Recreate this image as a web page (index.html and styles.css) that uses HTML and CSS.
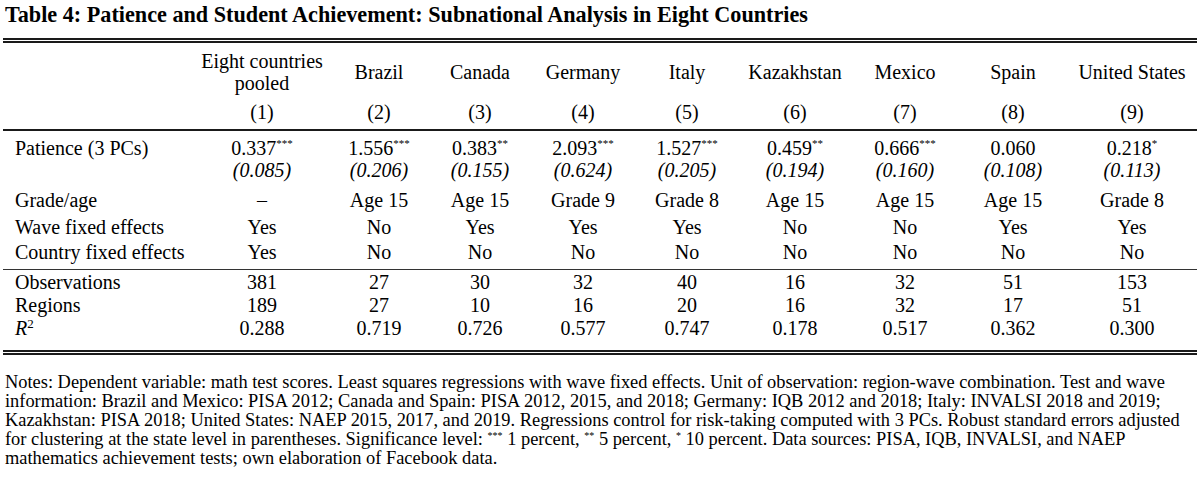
FILE: index.html
```html
<!DOCTYPE html>
<html lang="en">
<head>
<meta charset="utf-8">
<title>Table 4</title>
<link rel="stylesheet" href="styles.css">
</head>
<body>
<div class="page">
  <h1 class="title">Table 4: Patience and Student Achievement: Subnational Analysis in Eight Countries</h1>
  <div class="rule-double rule-top"></div>
  <table class="tbl">
    <colgroup>
      <col class="c-label"><col class="c1"><col class="c2"><col class="c3"><col class="c4"><col class="c5"><col class="c6"><col class="c7"><col class="c8"><col class="c9">
    </colgroup>
    <thead>
      <tr class="hdr-names">
        <th></th><th>Eight countries<br>pooled</th><th>Brazil</th><th>Canada</th><th>Germany</th><th>Italy</th><th>Kazakhstan</th><th>Mexico</th><th>Spain</th><th>United States</th>
      </tr>
      <tr class="hdr-nums">
        <th></th><th>(1)</th><th>(2)</th><th>(3)</th><th>(4)</th><th>(5)</th><th>(6)</th><th>(7)</th><th>(8)</th><th>(9)</th>
      </tr>
    </thead>
    <tbody class="main">
      <tr class="r-coef">
        <td>Patience (3 PCs)</td><td>0.337<sup>***</sup></td><td>1.556<sup>***</sup></td><td>0.383<sup>**</sup></td><td>2.093<sup>***</sup></td><td>1.527<sup>***</sup></td><td>0.459<sup>**</sup></td><td>0.666<sup>***</sup></td><td>0.060</td><td>0.218<sup>*</sup></td>
      </tr>
      <tr class="r-se">
        <td></td><td>(0.085)</td><td>(0.206)</td><td>(0.155)</td><td>(0.624)</td><td>(0.205)</td><td>(0.194)</td><td>(0.160)</td><td>(0.108)</td><td>(0.113)</td>
      </tr>
      <tr class="r-grade">
        <td>Grade/age</td><td>–</td><td>Age 15</td><td>Age 15</td><td>Grade 9</td><td>Grade 8</td><td>Age 15</td><td>Age 15</td><td>Age 15</td><td>Grade 8</td>
      </tr>
      <tr class="r-wave">
        <td>Wave fixed effects</td><td>Yes</td><td>No</td><td>Yes</td><td>Yes</td><td>Yes</td><td>No</td><td>No</td><td>Yes</td><td>Yes</td>
      </tr>
      <tr class="r-country">
        <td>Country fixed effects</td><td>Yes</td><td>No</td><td>No</td><td>No</td><td>No</td><td>No</td><td>No</td><td>No</td><td>No</td>
      </tr>
    </tbody>
    <tbody class="stats">
      <tr class="r-obs">
        <td>Observations</td><td>381</td><td>27</td><td>30</td><td>32</td><td>40</td><td>16</td><td>32</td><td>51</td><td>153</td>
      </tr>
      <tr class="r-reg">
        <td>Regions</td><td>189</td><td>27</td><td>10</td><td>16</td><td>20</td><td>16</td><td>32</td><td>17</td><td>51</td>
      </tr>
      <tr class="r-r2">
        <td><i>R</i><sup class="sq">2</sup></td><td>0.288</td><td>0.719</td><td>0.726</td><td>0.577</td><td>0.747</td><td>0.178</td><td>0.517</td><td>0.362</td><td>0.300</td>
      </tr>
    </tbody>
  </table>
  <div class="rule-double"></div>
  <p class="notes">Notes: Dependent variable: math test scores. Least squares regressions with wave fixed effects. Unit of observation: region-wave combination. Test and wave<br>information: Brazil and Mexico: PISA 2012; Canada and Spain: PISA 2012, 2015, and 2018; Germany: IQB 2012 and 2018; Italy: INVALSI 2018 and 2019;<br>Kazakhstan: PISA 2018; United States: NAEP 2015, 2017, and 2019. Regressions control for risk-taking computed with 3 PCs. Robust standard errors adjusted<br>for clustering at the state level in parentheses. Significance level: <sup>***</sup> 1 percent, <sup>**</sup> 5 percent, <sup>*</sup> 10 percent. Data sources: PISA, IQB, INVALSI, and NAEP<br>mathematics achievement tests; own elaboration of Facebook data.</p>
</div>
</body>
</html>
```
FILE: styles.css
```css
html, body {
  margin: 0;
  padding: 0;
  background: #ffffff;
}
body {
  font-family: "Liberation Serif", "Times New Roman", serif;
  color: #000000;
  width: 1200px;
  height: 478px;
  overflow: hidden;
}
.page {
  padding: 2px 3px 0 3px;
}
.title {
  margin: 0;
  padding-left: 2px;
  font-size: 22.2px;
  line-height: 26px;
  font-weight: bold;
  white-space: nowrap;
}
.rule-double {
  height: 1px;
  border-top: 2px solid #1a1a1a;
  border-bottom: 2px solid #1a1a1a;
}
.rule-top {
  margin-top: 10px;
}
.tbl {
  width: 1194px;
  table-layout: fixed;
  border-collapse: separate;
  border-spacing: 0;
  font-size: 20px;
  line-height: 22px;
}
.c-label { width: 195px; }
.c1 { width: 128px; }
.c2 { width: 106px; }
.c3 { width: 96px; }
.c4 { width: 110px; }
.c5 { width: 98px; }
.c6 { width: 118px; }
.c7 { width: 102px; }
.c8 { width: 114px; }
.c9 { width: 127px; }
.tbl th, .tbl td {
  padding: 0;
  text-align: center;
  font-weight: normal;
  white-space: nowrap;
  vertical-align: middle;
}
.tbl th:first-child, .tbl td:first-child {
  text-align: left;
  padding-left: 12px;
}
.tbl th:last-child, .tbl td:last-child {
  padding-right: 3px;
}
.hdr-names th {
  padding-top: 7px;
}
.hdr-nums th {
  padding-top: 7px;
  padding-bottom: 6px;
  border-bottom: 2px solid #1a1a1a;
}
.r-coef td {
  padding-top: 6px;
}
.r-se td {
  font-style: italic;
}
.r-grade td, .r-wave td, .r-country td {
  line-height: 24px;
}
.r-grade td {
  padding-top: 7px;
}
.r-wave td {
  padding-top: 3px;
}
.r-country td {
  padding-top: 1px;
  padding-bottom: 5px;
  border-bottom: 1px solid #333333;
}
.stats td {
  line-height: 23px;
}
.r-obs td {
  padding-top: 1px;
}
.r-r2 td {
  padding-bottom: 10px;
}
sup {
  font-size: 11px;
  line-height: 0;
  vertical-align: 8px;
}
sup.sq {
  font-size: 13px;
  vertical-align: 7px;
}
.notes {
  margin: 18px 0 0 2px;
  font-size: 18.4px;
  line-height: 19px;
  white-space: nowrap;
}
.notes sup {
  font-size: 10px;
  vertical-align: 6px;
}
```
